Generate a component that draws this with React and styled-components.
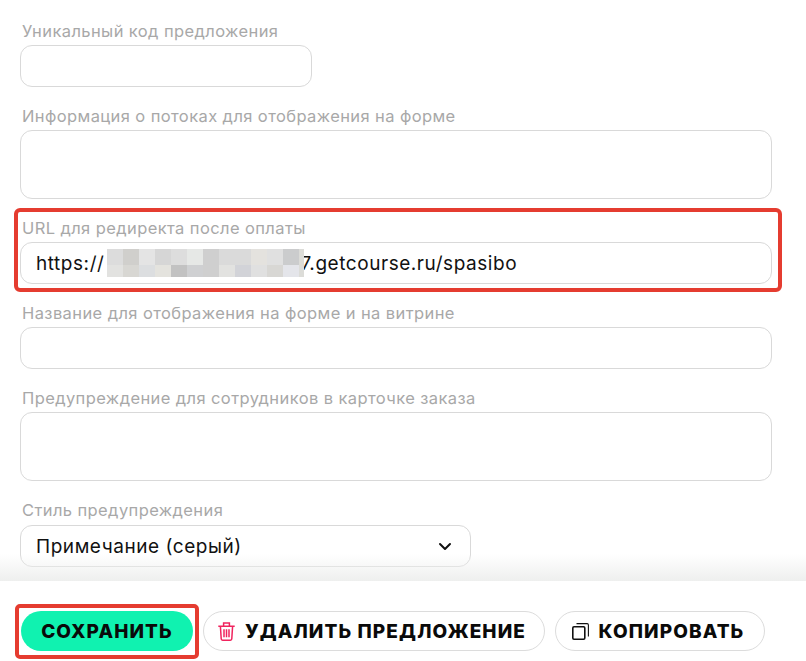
import React from "react";
import styled, { createGlobalStyle } from "styled-components";

const Global = createGlobalStyle`
  html, body { margin: 0; padding: 0; background: #fff; }
  body { font-family: "Inter", "Noto Sans", sans-serif; overflow: hidden; }
`;

const Page = styled.div`
  position: relative; width: 806px; height: 661px; display: flex; flex-direction: column; overflow: hidden; background: #fff;
`;
const Form = styled.div`
  position: relative; flex: none; height: 581px; box-sizing: border-box; overflow: hidden;
  padding: 21px 34px 0 20px; display: flex; flex-direction: column; gap: 19px;
  &::after {
    content: ""; position: absolute; left: 0; right: 0; bottom: 0; height: 27px;
    background: linear-gradient(to bottom, rgba(239,240,239,0), #eeefee);
  }
`;
const Field = styled.div`
  display: flex; flex-direction: column; width: ${p => (p.$w ? p.$w + "px" : "100%")};
`;
const Label = styled.label`
  font-size: 16.5px; line-height: 20px; letter-spacing: 0.4px; color: #a8a8a8; margin: 0 0 ${p => p.$mb ?? 4}px 2px; white-space: nowrap;
`;
const Box = styled.div`
  box-sizing: border-box; height: ${p => p.$h || 42}px; border: 1px solid #d9d9d9; border-radius: 12px; background: #fff;
  display: flex; align-items: center; justify-content: space-between; padding: 0 18px 0 15px;
  font-size: 19px; letter-spacing: 0.55px; color: #111; white-space: nowrap;
`;
const Value = styled.span`
  display: inline-flex; align-items: center;
`;
const Highlight = styled.div`
  position: absolute; left: 14px; top: 208px; width: 768px; height: 84px; box-sizing: border-box;
  border: 4px solid #e53c30; border-radius: 6px; pointer-events: none;
`;
const Footer = styled.div`
  flex: 1; display: flex; align-items: flex-start; gap: 10px; padding: 30px 0 0 21px; background: #fff;
`;
const Btn = styled.button`
  flex: none; height: 40px; width: ${p => p.$w}px; box-sizing: border-box; border-radius: 20px;
  padding: 0 ${p => (p.$primary ? 0 : 4)}px 0 0;
  border: ${p => (p.$primary ? "none" : "1px solid #dcdcdc")};
  background: ${p => (p.$primary ? "#10f2b0" : "#fff")};
  font-family: "Inter", "Noto Sans", sans-serif; font-weight: 800; font-size: 19px; letter-spacing: 1.1px; color: #0a0a0a;
  display: flex; align-items: center; justify-content: center; gap: 10px;
`;
const SaveMark = styled.div`
  position: absolute; left: 15px; top: 604px; width: 184px; height: 55px; box-sizing: border-box;
  border: 4px solid #e53c30; border-radius: 5px; pointer-events: none;
`;
const MosaicSvg = styled.svg`
  flex: none; margin: 0 -4px 0 3px; position: relative; z-index: 1;
`;

const rowA = ["#dcdcdc","#d0cfcc","#e4e4e4","#d6d6d6","#dddddd","#e6e8e6","#cfcfcf","#dadada","#dadada","#e4e2de","#e0e0e0","#cbcccd","#dcdcd8"];
const rowB = ["#e2e2e0","#d8d7d3","#dcdee0","#e4e3de","#c2c2c2","#cfd0d2","#cfcfcf","#e2e2e0","#d2d3d8","#e0e0e0","#d8d7d4","#e4e5ea","#dcdcd8"];

const Mosaic = () => (
  <MosaicSvg width="197" height="28" viewBox="0 0 197 28">
    {rowA.map((c, i) => <rect key={"a" + i} x={i * 16} y="0" width="16" height="16" fill={c} />)}
    {rowB.map((c, i) => <rect key={"b" + i} x={i * 16} y="16" width="16" height="12" fill={c} />)}
  </MosaicSvg>
);
const Trash = () => (
  <svg width="17" height="19" viewBox="0 0 17 19" fill="none" stroke="#f0245e" strokeWidth="1.5">
    <path d="M.3 4.2h16.4M5.6 4.2V1h5.8v3.2M2.4 4.2l.8 12.6a1.4 1.4 0 0 0 1.4 1.4h7.8a1.4 1.4 0 0 0 1.4-1.4l.8-12.6M6 7.2v8M8.5 7.2v8M11 7.2v8" />
  </svg>
);
const Copy = () => (
  <svg width="17" height="17" viewBox="0 0 17 17" fill="none" stroke="#111">
    <rect x="0.8" y="3.8" width="12" height="12.4" rx="1.2" strokeWidth="1.6" />
    <path d="M4.5 .6h10.6a1.3 1.3 0 0 1 1.3 1.3V13.5" strokeWidth="1.1" />
  </svg>
);
const Chevron = () => (
  <svg width="14" height="9" viewBox="0 0 14 9" fill="none" stroke="#111" strokeWidth="2" strokeLinecap="round" strokeLinejoin="round">
    <path d="M2 2l5 5 5-5" />
  </svg>
);

export default function App() {
  return (
    <Page>
      <Global />
      <Form>
        <Field $w={292}>
          <Label>Уникальный код предложения</Label>
          <Box />
        </Field>
        <Field>
          <Label>Информация о потоках для отображения на форме</Label>
          <Box $h={69} />
        </Field>
        <Field>
          <Label>URL для редиректа после оплаты</Label>
          <Box>
            <Value>https://<Mosaic />7.getcourse.ru/spasibo</Value>
          </Box>
        </Field>
        <Field>
          <Label>Название для отображения на форме и на витрине</Label>
          <Box />
        </Field>
        <Field>
          <Label>Предупреждение для сотрудников в карточке заказа</Label>
          <Box $h={69} />
        </Field>
        <Field $w={451}>
          <Label $mb={5}>Стиль предупреждения</Label>
          <Box>
            <Value>Примечание (серый)</Value>
            <Chevron />
          </Box>
        </Field>
      </Form>
      <Highlight />
      <Footer>
        <Btn $primary $w={172}>СОХРАНИТЬ</Btn>
        <Btn $w={342}><Trash />УДАЛИТЬ ПРЕДЛОЖЕНИЕ</Btn>
        <Btn $w={210}><Copy />КОПИРОВАТЬ</Btn>
      </Footer>
      <SaveMark />
    </Page>
  );
}
